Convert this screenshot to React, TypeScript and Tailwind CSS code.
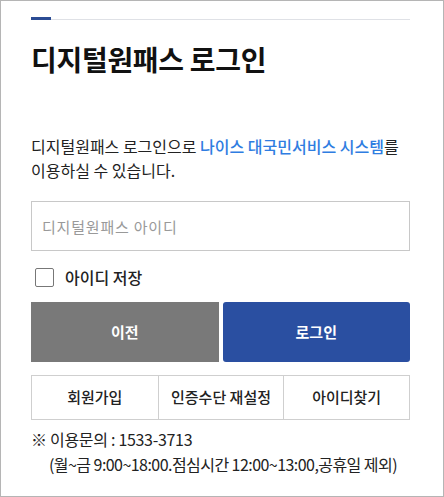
import React from "react";

export default function App() {
  return (
    <div
      className="w-[444px] h-[497px] bg-white border border-[#b5b5b5] overflow-hidden"
      style={{ fontFamily: '"Noto Sans CJK KR", "Noto Sans", sans-serif' }}
    >
      <div className="pl-[30px] pr-[33px] pt-[16px]">
        {/* Header rule */}
        <div className="flex items-end">
          <div className="w-[20px] h-[3px] bg-[#2b4c94]" />
          <div className="flex-1 h-px bg-[#dfe1e6]" />
        </div>

        <h1 className="mt-[19px] text-[28px] font-bold text-[#111] tracking-[-0.3px] leading-[40px]">
          디지털원패스 로그인
        </h1>

        <p className="mt-[55px] text-[16px] leading-[24px] text-[#222]">
          디지털원패스 로그인으로{" "}
          <span className="text-[#2f7de1] font-medium">나이스 대국민서비스 시스템</span>를
          <br />
          이용하실 수 있습니다.
        </p>

        <input
          type="text"
          placeholder="디지털원패스 아이디"
          className="mt-[19px] w-full h-[50px] border border-[#c8c8c8] px-[10px] text-[15px] placeholder:text-[#999] outline-none tracking-[0.8px]"
        />

        <label className="mt-[14px] flex items-center gap-[11px] pl-[4px]">
          <span className="w-[19px] h-[19px] border border-[#777] rounded-[2px] bg-white" />
          <span className="text-[16px] text-[#222] font-medium">아이디 저장</span>
        </label>

        <div className="mt-[13px] flex gap-[4px]">
          <button className="flex-1 h-[60px] bg-[#797979] text-white text-[15px] font-bold">
            이전
          </button>
          <button className="flex-1 h-[60px] bg-[#2a4fa1] rounded-[3px] text-white text-[15px] font-bold">
            로그인
          </button>
        </div>

        <div className="mt-[13px] grid grid-cols-3 h-[45px] border border-[#cfcfcf]">
          <div className="flex items-center justify-center text-[15px] text-[#222] font-medium">회원가입</div>
          <div className="flex items-center justify-center text-[15px] text-[#222] font-medium border-l border-[#cfcfcf]">
            인증수단 재설정
          </div>
          <div className="flex items-center justify-center text-[15px] text-[#222] font-medium border-l border-[#cfcfcf]">
            아이디찾기
          </div>
        </div>

        <div className="mt-[7px] text-[16px] leading-[25px] text-[#222] tracking-[-0.3px]">
          <p>※ 이용문의 : 1533-3713</p>
          <p className="pl-[18px] tracking-[-0.55px]">(월~금 9:00~18:00.점심시간 12:00~13:00,공휴일 제외)</p>
        </div>
      </div>
    </div>
  );
}
